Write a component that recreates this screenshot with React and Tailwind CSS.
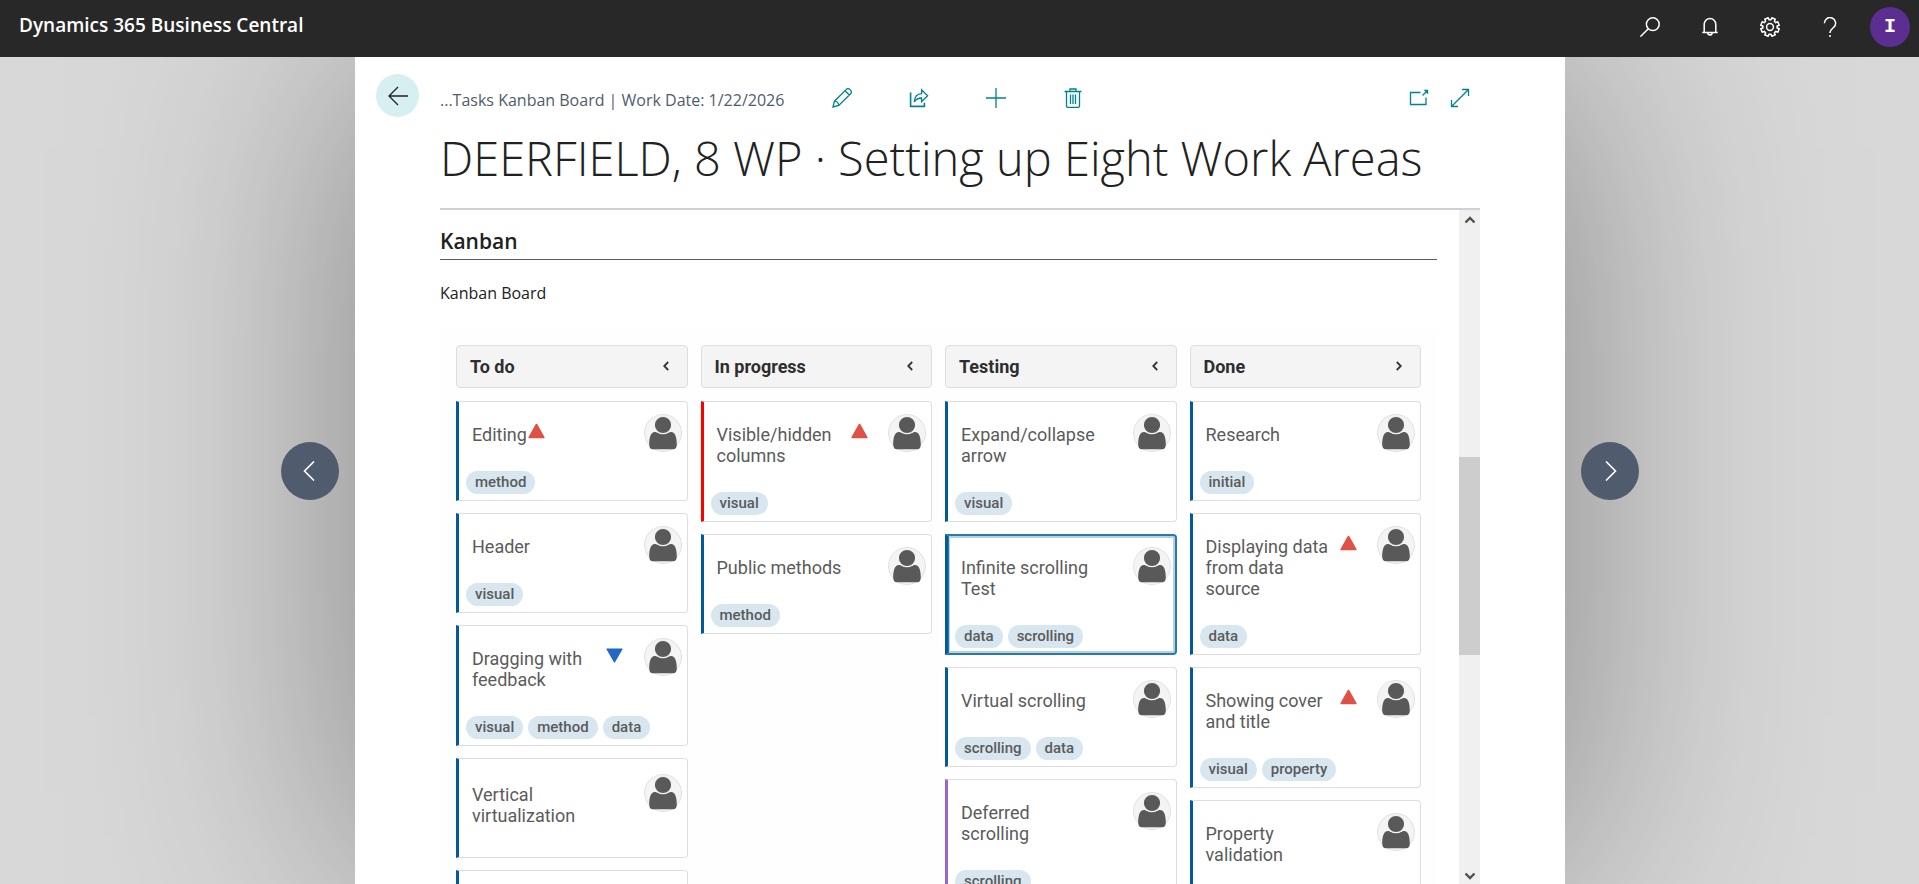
import { useState } from 'react';

const COLUMNS = [
  {
    title: 'To do',
    open: true,
    cards: [
      { title: 'Editing', priority: 'high', tags: ['method'] },
      { title: 'Header', tags: ['visual'] },
      { title: 'Dragging with feedback', priority: 'low', tags: ['visual', 'method', 'data'] },
      { title: 'Vertical virtualization', tags: [] },
      { title: '', tags: [] },
    ],
  },
  {
    title: 'In progress',
    open: true,
    cards: [
      { title: 'Visible/hidden columns', priority: 'high', tags: ['visual'], accent: 'red' },
      { title: 'Public methods', tags: ['method'] },
    ],
  },
  {
    title: 'Testing',
    open: true,
    cards: [
      { title: 'Expand/collapse arrow', tags: ['visual'] },
      { title: 'Infinite scrolling Test', tags: ['data', 'scrolling'] },
      { title: 'Virtual scrolling', tags: ['scrolling', 'data'] },
      { title: 'Deferred scrolling', tags: ['scrolling'], accent: 'purple' },
    ],
  },
  {
    title: 'Done',
    open: false,
    cards: [
      { title: 'Research', tags: ['initial'] },
      { title: 'Displaying data from data source', priority: 'high', tags: ['data'] },
      { title: 'Showing cover and title', priority: 'high', tags: ['visual', 'property'] },
      { title: 'Property validation', tags: [], tall: true },
    ],
  },
];

const ACCENTS = {
  blue: 'border-l-[#005c99]',
  red: 'border-l-[#fe0000]',
  purple: 'border-l-[#9966cc]',
};

function Icon({ children, className = 'size-5' }) {
  return (
    <svg
      viewBox="0 0 20 20"
      className={className}
      fill="none"
      stroke="currentColor"
      strokeWidth="1.3"
      aria-hidden="true"
    >
      {children}
    </svg>
  );
}

// eight-toothed outline around the 20x20 box centre
function gearPath() {
  const pts = [];
  for (let i = 0; i < 8; i++) {
    const a = (i * Math.PI) / 4 + Math.PI / 8;
    [[-0.26, 7.2], [-0.2, 9.4], [0.2, 9.4], [0.26, 7.2]].forEach(([d, r]) => {
      pts.push(`${(10 + r * Math.cos(a + d)).toFixed(2)} ${(10 + r * Math.sin(a + d)).toFixed(2)}`);
    });
  }
  return `M${pts.join('L')}Z`;
}

const SearchIcon = () => (
  <Icon>
    <circle cx="12.8" cy="7.2" r="6.4" strokeWidth="1.5" />
    <path d="M8.3 11.7 0.4 19.6" strokeWidth="1.5" />
  </Icon>
);

const BellIcon = () => (
  <Icon>
    <path
      d="M2.3 15.5h15.4M4.2 15.5V7.3a5.8 5.8 0 0 1 11.6 0v8.2M7.8 15.8a2.2 2.2 0 0 0 4.4 0"
      strokeWidth="1.5"
    />
  </Icon>
);

const GearIcon = () => (
  <Icon>
    <path d={gearPath()} strokeWidth="1.5" strokeLinejoin="round" />
    <circle cx="10" cy="10" r="3.4" strokeWidth="1.5" />
  </Icon>
);

const HelpIcon = () => (
  <Icon>
    <path d="M4.4 6.2a5.6 5.6 0 1 1 9.6 3.9c-1.7 1.7-4 2.8-4 5.4v.6M10 18v2" strokeWidth="1.5" />
  </Icon>
);

const PencilIcon = () => (
  <Icon>
    <path d="M1 19l1.5-5.8L14.3 1.4a2.4 2.4 0 0 1 3.5 0l.8.8a2.4 2.4 0 0 1 0 3.5L6.8 17.5zM2.5 13.2c2.2.2 4 2 4.3 4.3M13 2.7l4.3 4.3" />
  </Icon>
);

const ShareIcon = () => (
  <Icon>
    <path d="M1.6 4.6v13.8h13.8v-3.6" strokeWidth="1.6" />
    <path d="M5.2 14c.5-5.6 3.2-8.3 7.4-8.4V1.8l6 6-6 6V10c-3.4 0-5.6 1.2-7.4 4z" />
  </Icon>
);

const PlusIcon = () => (
  <Icon>
    <path d="M10 0v20M0 10h20" />
  </Icon>
);

const TrashIcon = () => (
  <Icon>
    <path d="M1.5 3.5h17M7 3.5V1h6v2.5M3.5 3.5V18a1.4 1.4 0 0 0 1.4 1.4h10.2a1.4 1.4 0 0 0 1.4-1.4V3.5M7.5 6.5V16M10 6.5V16M12.5 6.5V16" />
  </Icon>
);

const PopOutIcon = () => (
  <Icon>
    <path d="M11.5 4.5h-10v12H17v-7M13.5 7.5l5-5" />
    <path d="M14.5 1.8h4.7v4.7z" fill="currentColor" stroke="none" />
  </Icon>
);

const ExpandIcon = () => (
  <Icon>
    <path d="M1.5 18.5l17-17M12 1.5h6.5V8M1.5 12v6.5H8" />
  </Icon>
);

function Priority({ level }) {
  return (
    <svg viewBox="0 0 17 16" className="mt-[9px] ml-px h-4 w-[17px] shrink-0" role="img" aria-label={`${level} priority`}>
      {level === 'high' ? (
        <path d="M8.5 1.5 15.8 14.5H1.2z" fill="#de5246" stroke="#de5246" strokeWidth="1.6" strokeLinejoin="round" />
      ) : (
        <path d="M8.5 15 1 2h15z" fill="#2366c4" stroke="#2366c4" strokeWidth="1.2" strokeLinejoin="round" />
      )}
    </svg>
  );
}

function Avatar() {
  return (
    <svg viewBox="0 0 38 38" className="-mb-4 ml-auto size-[38px] shrink-0" aria-hidden="true">
      <circle cx="19" cy="19" r="18.5" fill="#f4f4f4" stroke="#e1e1e1" />
      <path
        d="M11 18c2 0 3 2 8 2s6-2 8-2c4.5 0 5.8 6 5.8 12.5 0 3-1.3 4.700-3.300 4.700h-21c-2 0-3.300-1.700-3.300-4.700C5.200 24 6.500 18 11 18z"
        fill="#595959"
      />
      <circle cx="19" cy="11" r="8.7" fill="#595959" stroke="#f4f4f4" strokeWidth="1.2" />
    </svg>
  );
}

function Card({ card, selected, onSelect }) {
  const frame = selected
    ? 'border-y-2 border-r-2 border-y-[#2a78ac] border-r-[#2a78ac] shadow-[inset_1px_0_0_#2a78ac,inset_0_0_0_2px_#b5d2e3]'
    : 'border-y border-r border-y-[#dedede] border-r-[#dedede] py-px pr-px';
  return (
    <article
      onClick={onSelect}
      className={`flex flex-col rounded-r border-l-3 bg-white ${card.tall ? 'min-h-[121px]' : 'min-h-[100px] justify-center'} ${ACCENTS[card.accent || 'blue']} ${frame}`}
    >
      {card.title && (
        <div className={`flex items-start pt-[11px] pr-1 pl-[13px] ${card.tags.length > 0 ? 'pb-[26px]' : 'pb-7'}`}>
          <h3 className="mt-2.5 max-w-[133px] text-[18px] leading-[21px] text-[#5b5b5b]">{card.title}</h3>
          {card.priority && <Priority level={card.priority} />}
          <Avatar />
        </div>
      )}
      {card.tags.length > 0 && (
        <div className="flex gap-[5px] pb-[5px] pl-[7px]">
          {card.tags.map(tag => (
            <span key={tag} className="h-[23px] rounded-full bg-[#d8e6ef] px-[9px] text-[15px] leading-[23px] font-medium text-[#5b5b5b]">
              {tag}
            </span>
          ))}
        </div>
      )}
    </article>
  );
}

function Column({ column, selected, onSelect }) {
  return (
    <section className="flex min-w-0 flex-col gap-3">
      <header className="mb-px flex h-[43px] items-center justify-between rounded border border-[#dedede] bg-[#f4f4f4] pr-[18px] pl-[13px]">
        <h2 className="text-[18px] font-bold text-[#2e2e2e]">{column.title}</h2>
        <button aria-label={`Toggle ${column.title}`} className="pb-0.5 text-[#333]">
          <svg viewBox="0 0 6 10" className="h-[10px] w-[6px]" fill="none" stroke="currentColor" strokeWidth="1.8">
            <path d={column.open ? 'M5.2 1 1.2 5l4 4' : 'M0.8 1l4 4-4 4'} />
          </svg>
        </button>
      </header>
      {column.cards.map((card, i) => (
        <Card
          key={i}
          card={card}
          selected={card.title === selected}
          onSelect={() => onSelect(card.title)}
        />
      ))}
    </section>
  );
}

function ScrollArrow({ down }) {
  return (
    <svg viewBox="0 0 12 8" className="h-2 w-3 shrink-0" fill="none" stroke="#505050" strokeWidth="2.4">
      <path d={down ? 'M1.5 1.5 6 6l4.5-4.5' : 'M1.5 6.5 6 2l4.5 4.5'} />
    </svg>
  );
}

function PageButton({ label, d }) {
  return (
    <button aria-label={label} className="mx-4 flex size-[58px] items-center justify-center rounded-full bg-[#505c6d] text-white">
      <Icon>
        <path d={d} strokeWidth="1.6" />
      </Icon>
    </button>
  );
}

export default function App() {
  const [selected, setSelected] = useState('Infinite scrolling Test');

  return (
    <div className="flex h-screen flex-col overflow-hidden bg-[#d8d8d8] font-['Segoe_UI','Open_Sans',sans-serif] text-[#212121]">
      <header className="relative z-20 flex h-[57px] shrink-0 items-center justify-between bg-[#282828] pr-[9px] pb-[3px] pl-[19px] text-white">
        <a href="#" className="pb-1 text-[19px] font-semibold">Dynamics 365 Business Central</a>
        <nav className="flex items-center gap-10">
          <button aria-label="Search"><SearchIcon /></button>
          <button aria-label="Notifications"><BellIcon /></button>
          <button aria-label="Settings"><GearIcon /></button>
          <button aria-label="Help"><HelpIcon /></button>
          <button aria-label="Account" className="-ml-2.5 size-10 rounded-full bg-[#5c2e91] font-['Liberation_Mono',monospace] text-[20px] font-bold">
            I
          </button>
        </nav>
      </header>

      <div className="flex min-h-0 flex-1">
        <aside className="relative z-10 flex min-w-0 flex-[355] items-center justify-end">
          <PageButton label="Previous record" d="M14 0.5 4.5 10l9.5 9.5" />
        </aside>

        <main className="flex min-w-0 flex-[1210] flex-col bg-white shadow-[0_0_300px_rgba(0,0,0,0.4)]">
          <div className="flex h-[60px] shrink-0 items-end pr-[95px] pl-[21px]">
            <button aria-label="Back" className="flex size-[43px] shrink-0 items-center justify-center rounded-full bg-[#d8eff1]">
              <Icon><path d="M20 10H1M10 1 1 10l9 9" /></Icon>
            </button>
            <p className="ml-[21px] pb-[5px] text-[16px] whitespace-nowrap text-[#505c6d]">...Tasks Kanban Board | Work Date: 1/22/2026</p>
            <div className="ml-12 flex gap-[57px] pb-[9px] text-[#00838a]">
              <button aria-label="Edit"><PencilIcon /></button>
              <button aria-label="Share"><ShareIcon /></button>
              <button aria-label="New"><PlusIcon /></button>
              <button aria-label="Delete"><TrashIcon /></button>
            </div>
            <div className="ml-auto flex gap-[21px] pb-[9px] text-[#00838a]">
              <button aria-label="Open in new window"><PopOutIcon /></button>
              <button aria-label="Expand"><ExpandIcon /></button>
            </div>
          </div>

          <h1 className="mx-[85px] h-[93px] shrink-0 border-b-2 border-[#cfd1d8] pt-[7px] text-[47px] leading-[68px] font-light whitespace-nowrap">
            DEERFIELD, 8 WP · Setting up Eight Work Areas
          </h1>

          <div className="mx-[85px] flex min-h-0 flex-1">
            <div className="mr-[22px] min-w-0 flex-1 overflow-hidden">
              <h2 className="h-[50px] border-b border-[#505c6d] pt-4 text-[21px] leading-[30px] font-semibold">Kanban</h2>
              <p className="pt-[21px] text-[16px] leading-6">Kanban Board</p>
              <div className="mt-6 grid grid-cols-4 gap-[13px] bg-[#fefefe] px-4 pt-4 font-['Roboto',sans-serif]">
                {COLUMNS.map(column => (
                  <Column key={column.title} column={column} selected={selected} onSelect={setSelected} />
                ))}
              </div>
            </div>
            <div className="flex w-[21px] shrink-0 flex-col items-center bg-[#f0f0f0] pt-1.5 pb-1">
              <ScrollArrow />
              <div className="min-h-0 flex-[233]" />
              <div className="min-h-0 w-full flex-[198] bg-[#cdcdcd]" />
              <div className="min-h-0 flex-[217]" />
              <ScrollArrow down />
            </div>
          </div>
        </main>

        <aside className="relative z-10 flex min-w-0 flex-[354] items-center">
          <PageButton label="Next record" d="M6 0.5 15.5 10 6 19.5" />
        </aside>
      </div>
    </div>
  );
}
